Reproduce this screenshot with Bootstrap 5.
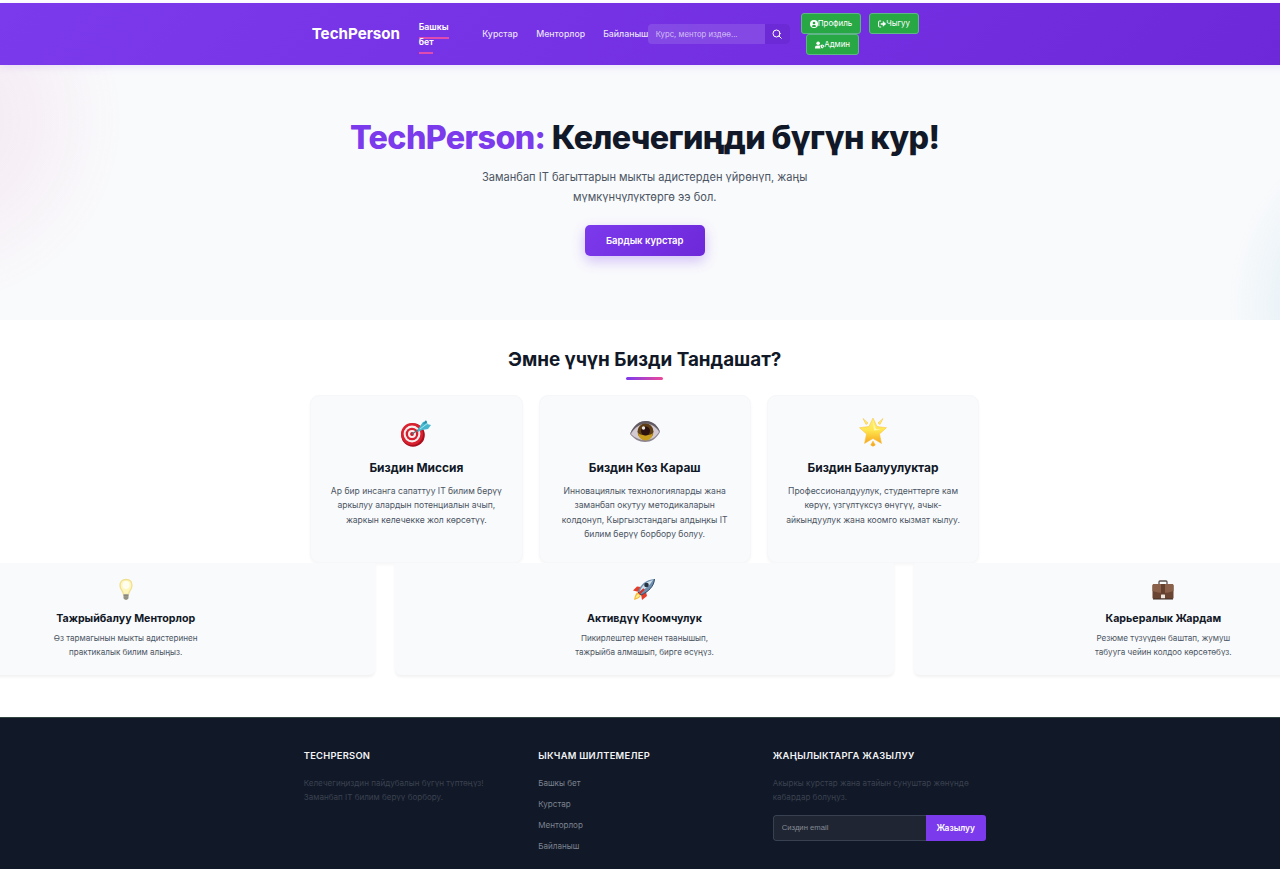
<!DOCTYPE html>
<html lang="ky">
<head>
<meta charset="utf-8">
<meta name="viewport" content="width=device-width, initial-scale=1">
<title>TechPerson</title>
<link href="https://cdn.jsdelivr.net/npm/bootstrap@5.3.0/dist/css/bootstrap.min.css" rel="stylesheet">
<style>
:root{--violet:#7c3aed;--violet-dark:#6d28d9;--ink:#111827;--muted:#4b5563}
html{font-size:8.533px;overflow:hidden}
body{font-family:Inter,"Noto Sans",sans-serif;font-size:1rem;color:var(--ink);background:#fff;overflow:hidden;height:869px}
.page{width:1289.4px;padding-top:3px}
.shell{width:682px;margin:0 auto}
.topnav{height:62px;padding:0;background:linear-gradient(135deg,var(--violet),var(--violet-dark));box-shadow:0 2px 8px rgba(124,58,237,.12);position:relative;z-index:2}
.topnav .shell{height:62px;padding-left:8px}
.brand{font-size:15.15px;font-weight:700;color:#fff;width:107px;line-height:1}
.menu{padding-top:2px}
.menu a{font-size:8.75px;font-weight:500;color:rgba(255,255,255,.87);text-decoration:none}
.menu .first{width:63.5px;line-height:15px;padding-right:26px}
.menu .first a{color:#fff;font-weight:600;padding-bottom:5px;border-bottom:2px solid #e04bb0}
.search{width:142px;height:20px;border-radius:4px;overflow:hidden;background:rgba(255,255,255,.12)}
.search input{width:117px;border:0;background:none;padding:1px 8px 0;font-size:7.73px;color:#fff;outline:0}
.search input::placeholder{color:rgba(255,255,255,.65);opacity:1}
.search button{width:25px;border:0;padding:0;background:#6b2ad6}
.account{width:119px;margin-left:11px;column-gap:8px}
.account .btn{height:21px;padding:0 8px;border:1px solid #5fb588;border-radius:3px;background:#28a745;color:#fff;font-size:7.9px;line-height:1;display:flex;align-items:center;white-space:nowrap}
.hero{height:255px;background:radial-gradient(circle 185px at -62px 55px,rgba(200,60,140,.075) 25%,rgba(200,60,140,.045) 60%,transparent),radial-gradient(circle 190px at 1418px 240px,rgba(14,140,190,.1) 50%,transparent),#f9fafc;padding-top:54px}
.hero h1{font-size:32.25px;font-weight:800;letter-spacing:-.62px;line-height:38px;margin:0 0 11px}
.hero h1 span{color:var(--violet)}
.hero p{font-size:11.07px;line-height:19.9px;color:var(--muted);margin:0 0 17px}
.cta{width:120px;height:31px;border:0;border-radius:5px;background:linear-gradient(135deg,var(--violet),var(--violet-dark));color:#fff;font-size:9.52px;font-weight:600;padding:1px 0 0;box-shadow:0 5px 13px rgba(124,58,237,.3)}
.why{height:243px;padding-top:27px}
.why h2{font-size:18.85px;font-weight:700;line-height:26px;margin:0 0 4px}
.rule{width:37px;height:3px;border-radius:2px;background:linear-gradient(90deg,var(--violet),#ec4899);margin-bottom:15px}
.trio{width:669px;gap:16px}
.value{flex:1;height:168px;background:#f9fafc;border-radius:9px;border:1px solid #f6f7f9;box-shadow:0 2px 3px rgba(0,0,0,.035);padding-top:18px}
.value svg{width:36px;height:36px;display:block;margin:0 auto 8px}
.value h3{font-size:11.94px;font-weight:700;line-height:20px;margin:0 0 5.6px}
.value p{font-size:8.55px;line-height:14.6px;color:var(--muted);margin:0}
.strip{margin-left:-123.5px;width:1536px;height:154px;gap:20.5px;overflow:hidden}
.perk{flex:1;height:112px;background:#f9fafc;border-radius:0 0 6px 6px;box-shadow:0 2px 3px rgba(0,0,0,.06);padding-top:14px}
.perk svg{width:24px;height:24px;display:block;margin:0 auto 8.5px}
.perk h4{font-size:10.67px;font-weight:700;line-height:17px;margin:0 0 5.5px}
.perk p{font-size:8.09px;line-height:13.5px;color:var(--muted);margin:0}
.foot{height:152px;background:#111827;padding-top:30.5px;border-top:1px solid #32443f;color:#fff}
.foot .cols{display:grid;grid-template-columns:213px 213px 213px;column-gap:21.5px}
.foot h5{font-size:9.35px;font-weight:600;letter-spacing:.27px;line-height:14px;margin:0 0 13px;color:#f3f4f6}
.foot p{font-size:8.07px;line-height:14.4px;color:#3a4250;margin:0 0 10.500px;white-space:nowrap}
.foot li{line-height:14.4px;margin-bottom:6.6px}
.foot li a{font-size:8.1px;color:#7c838f;text-decoration:none;display:block}
.mail{height:26px;border-radius:3px;overflow:hidden}
.mail input{width:153px;border:1px solid #374151;border-right:0;border-radius:3px 0 0 3px;background:#1f2532;padding:0 8px;font-family:"Liberation Sans",Inter,sans-serif;font-size:7.7px;color:#fff}
.mail input::placeholder{color:#858b95;opacity:1}
.mail button{flex:1;border:0;background:var(--violet);color:#fff;font-size:8.4px;font-weight:600;padding:0}
</style>
</head>
<body>
<div class="page">
<nav class="navbar topnav">
  <div class="shell d-flex align-items-center">
    <div class="brand">TechPerson</div>
    <div class="menu d-flex align-items-center">
      <div class="first"><a href="#">Башкы<br>бет</a></div>
      <a href="#" style="width:54px">Курстар</a>
      <a href="#" style="width:67px">Менторлор</a>
      <a href="#" style="width:44.5px">Байланыш</a>
    </div>
    <form class="search d-flex">
      <input type="text" placeholder="Курс, ментор издөө...">
      <button type="button" class="d-flex align-items-center justify-content-center" aria-label="Search"><svg width="10" height="10" viewBox="0 0 20 20" fill="none" stroke="#fff" stroke-width="2" stroke-linecap="round"><circle cx="9" cy="9" r="7"/><path d="M14 14l4.500 4.500"/></svg></button>
    </form>
    <div class="account d-flex flex-wrap">
      <a class="btn" href="#"><svg width="8" height="8" viewBox="0 0 16 16"><circle cx="8" cy="8" r="8" fill="#fff"/><circle cx="8" cy="6" r="2.700" fill="#28a745"/><path d="M3.500 12.300C4 10.300 6 9.800 8 9.800s4 .5 4.500 2.500A6.500 6.500 0 0 1 8 14a6.500 6.500 0 0 1-4.500-1.700z" fill="#28a745"/></svg>Профиль</a>
      <a class="btn" href="#"><svg width="8" height="8" viewBox="0 0 16 16" fill="none" stroke="#fff" stroke-width="2" stroke-linecap="round"><path d="M5.500 2H3Q1.200 2 1.200 4v8q0 2 1.800 2h2.500"/><path d="M6.500 8H12" stroke-width="3"/><path d="M10 3.500v9L15.500 8z" fill="#fff" stroke-width="1"/></svg>Чыгуу</a>
      <a class="btn" href="#" style="margin-left:5.500px"><svg width="9" height="8" viewBox="0 0 20 16" fill="#fff"><circle cx="7" cy="4" r="4"/><path d="M0 16v-2c0-3 2-5 5-5h4c1 0 1.600.2 2 .5V13l1.500 3z"/><path d="M16 7l4 1.600c0 4-1.500 6-4 7.400-2.500-1.400-4-3.400-4-7.400zm0 2v4.800c1.200-.9 2-2 2.200-4z" fill-rule="evenodd"/></svg>Админ</a>
    </div>
  </div>
</nav>

<header class="hero text-center">
  <h1><span>TechPerson:</span> Келечегиңди бүгүн кур!</h1>
  <p>Заманбап IT багыттарын мыкты адистерден үйрөнүп, жаңы<br>мүмкүнчүлүктөргө ээ бол.</p>
  <button class="btn cta">Бардык курстар</button>
</header>

<section class="why text-center">
  <h2>Эмне үчүн Бизди Тандашат?</h2>
  <div class="rule mx-auto"></div>
  <div class="trio d-flex mx-auto">
    <article class="value">
      <svg viewBox="0 0 36 36"><circle cx="15" cy="21" r="11.800" fill="#a90f1f"/><circle cx="14" cy="20" r="11" fill="#d9212f"/><circle cx="14" cy="20" r="8.400" fill="#f7eeee"/><circle cx="14" cy="20" r="6.300" fill="#d5202f"/><circle cx="14" cy="20" r="4" fill="#f7eeee"/><circle cx="14" cy="20" r="1.900" fill="#c71c2b"/><path d="M14 20L26 12" stroke="#60717a" stroke-width="1.300"/><path d="M20 15l5-7 4-1 0 3 4 1-3 4-6 1-4 2z" fill="#45b6cd"/><path d="M25 10l3-4 1 3z" fill="#2890ab"/><path d="M22 15l8-6" stroke="#a6e6ed" stroke-width="1"/></svg>
      <h3>Биздин Миссия</h3>
      <p>Ар бир инсанга сапаттуу IT билим берүү<br>аркылуу алардын потенциалын ачып,<br>жаркын келечекке жол көрсөтүү.</p>
    </article>
    <article class="value">
      <svg viewBox="0 0 36 36"><path d="M3 20C7 11 12 7 19 7c7 0 12 5 14 11-4 7-9 10-15 10C12 28 7 25 3 20z" fill="#8d8590"/><path d="M4 20C8 13 13 10 19 10c6 0 11 4 13 8-4 6-8 8-14 8-5 0-10-2-14-6z" fill="#d3cad2"/><path d="M3 20C7 11 12 7 19 7c7 0 12 5 14 11C29 12 24 9.500 19 9.500 13 9.500 8 13 3 20z" fill="#625a61"/><circle cx="18.500" cy="17.500" r="8" fill="#5e3d14"/><path d="M11 19a7.500 7.500 0 0 0 15 0c-3 3-12 3-15 0z" fill="#c69b1e"/><circle cx="18.500" cy="17" r="4.500" fill="#2b1210"/><circle cx="16.500" cy="14" r="1.700" fill="#ece4df"/></svg>
      <h3>Биздин Көз Караш</h3>
      <p>Инновациялык технологияларды жана<br>заманбап окутуу методикаларын<br>колдонуп, Кыргызстандагы алдыңкы IT<br>билим берүү борбору болуу.</p>
    </article>
    <article class="value">
      <svg viewBox="0 0 36 36"><defs><linearGradient id="gold" x1="0" y1="0" x2="0" y2="1"><stop offset="0" stop-color="#fff07a"/><stop offset=".5" stop-color="#ffe44d"/><stop offset="1" stop-color="#f6a51d"/></linearGradient></defs><g fill="url(#gold)" stroke="#f6bd35" stroke-width=".5" stroke-linejoin="round"><path d="M18 4l4 8.500 9.500 1.200-7 6.300 2 9.500-8.500-5-8.500 5 2-9.500-7-6.300L14 12.500z"/><path d="M8 4.500l5 4.500-2 1.500zM28 4.500l-5 4.500 2 1.500zM18 27l2.300 4q-2.300 2.500-4.600 0z"/></g><path d="M18 8l3 7 5 .7-7 .8z" fill="#fff8ac"/></svg>
      <h3>Биздин Баалуулуктар</h3>
      <p>Профессионалдуулук, студенттерге кам<br>көрүү, үзгүлтүксүз өнүгүү, ачык-<br>айкындуулук жана коомго кызмат кылуу.</p>
    </article>
  </div>
</section>

<section class="strip d-flex text-center">
  <article class="perk">
    <svg viewBox="0 0 24 24"><path d="M12 2.500c4 0 6 2.700 6 6 0 4-3.200 5.500-3.500 9h-5c-.3-3.500-3.500-5-3.500-9 0-3.300 2-6 6-6z" fill="#fff6bd" stroke="#efdf92" stroke-width="1.300"/><ellipse cx="12" cy="8" rx="3.500" ry="4" fill="#fffdf0"/><path d="M9.500 17h5v4L13 23h-2l-1.500-2z" fill="#aaa795"/><path d="M9.500 18.800h5M9.700 21h4.600" stroke="#706f68" stroke-width=".8"/></svg>
    <h4>Тажрыйбалуу Менторлор</h4>
    <p>Өз тармагынын мыкты адистеринен<br>практикалык билим алыңыз.</p>
  </article>
  <article class="perk">
    <svg viewBox="0 0 24 24"><path d="M7 15c-3 0-4 3-5 8 4-1 7-3 7-6z" fill="#f8b83a"/><path d="M6.500 17c-2 1-2.500 2.500-3 4 2 0 3.500-1 4.500-3z" fill="#fff08a"/><path d="M9 10l-4-.5-4 4 6 1.500zM14 15l1 4-5 4-1-6z" fill="#e63d2a"/><path d="M6 15C8 8 14 2.500 22.500 2 23 9 16 15 9 18z" fill="#6e8fae"/><path d="M8 14C10 8 15 4.500 21 3 18 8 14 12 8 14z" fill="#d0e0eb"/><path d="M6 15l3 3C16 15 22 9.500 22.500 2" fill="none" stroke="#344d6c" stroke-width="1"/><circle cx="14.500" cy="8" r="2.300" fill="#263344"/><path d="M7 17l5-5" stroke="#d83024" stroke-width="2"/></svg>
    <h4>Активдүү Коомчулук</h4>
    <p>Пикирлештер менен таанышып,<br>тажрыйба алмашып, бирге өсүңүз.</p>
  </article>
  <article class="perk">
    <svg viewBox="0 0 24 24"><path d="M8 7V5q0-1 1-1h6q1 0 1 1v2" fill="none" stroke="#5b514e" stroke-width="1.300"/><rect x="1.500" y="7" width="21" height="15" rx="1.500" fill="#6b4533"/><path d="M3 7h18q1.500 0 1.500 2v5q-10 4-21 0V9Q1.500 7 3 7z" fill="#8a604a"/><path d="M10 7h4v11h-4z" fill="#65402f"/><rect x="10" y="17.500" width="4" height="4" rx=".5" fill="#eee7df"/><path d="M2 22h20" stroke="#3d2b25"/></svg>
    <h4>Карьералык Жардам</h4>
    <p>Резюме түзүүдөн баштап, жумуш<br>табууга чейин колдоо көрсөтөбүз.</p>
  </article>
</section>

<footer class="foot">
  <div class="shell cols">
    <div><h5>TECHPERSON</h5><p>Келечегиңиздин пайдубалын бүгүн түптөңүз!<br>Заманбап IT билим берүү борбору.</p></div>
    <div><h5>ЫКЧАМ ШИЛТЕМЕЛЕР</h5>
      <ul class="list-unstyled mb-0"><li><a href="#">Башкы бет</a></li><li><a href="#">Курстар</a></li><li><a href="#">Менторлор</a></li><li><a href="#">Байланыш</a></li></ul></div>
    <div><h5>ЖАҢЫЛЫКТАРГА ЖАЗЫЛУУ</h5><p>Акыркы курстар жана атайын сунуштар жөнүндө<br>кабардар болуңуз.</p>
      <form class="mail d-flex"><input type="email" placeholder="Сиздин email"><button type="button">Жазылуу</button></form></div>
  </div>
</footer>
</div>
<script src="https://cdn.jsdelivr.net/npm/bootstrap@5.3.0/dist/js/bootstrap.bundle.min.js"></script>
</body>
</html>
